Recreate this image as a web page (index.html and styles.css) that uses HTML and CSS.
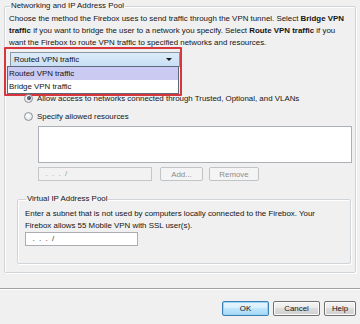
FILE: index.html
```html
<!DOCTYPE html>
<html>
<head>
<meta charset="utf-8">
<link rel="stylesheet" href="styles.css">
</head>
<body>
<div class="dialog">
  <fieldset class="group outer">
    <legend>Networking and IP Address Pool</legend>
    <p class="desc">Choose the method the Firebox uses to send traffic through the VPN tunnel. Select <b>Bridge VPN</b><br><b>traffic</b> if you want to bridge the user to a network you specify. Select <b>Route VPN traffic</b> if you<br>want the Firebox to route VPN traffic to specified networks and resources.</p>
    <div class="combo-wrap">
      <div class="combo"><span class="combo-text">Routed VPN traffic</span><span class="arrow"></span></div>
      <ul class="droplist">
        <li class="hl">Routed VPN traffic</li>
        <li>Bridge VPN traffic</li>
      </ul>
      <div class="callout"></div>
    </div>
    <div class="radio"><span class="dot on"></span><span>Allow access to networks connected through Trusted, Optional, and VLANs</span></div>
    <div class="radio"><span class="dot"></span><span>Specify allowed resources</span></div>
    <div class="listbox"></div>
    <div class="addrow">
      <div class="ipfield off">&nbsp;&nbsp;.&nbsp;&nbsp;.&nbsp;&nbsp;.&nbsp;&nbsp;/</div>
      <button class="btn off add">Add...</button>
      <button class="btn off remove">Remove</button>
    </div>
    <fieldset class="group inner">
      <legend>Virtual IP Address Pool</legend>
      <p class="desc2">Enter a subnet that is not used by computers locally connected to the Firebox. Your<br>Firebox allows 55 Mobile VPN with SSL user(s).</p>
      <div class="ipfield vip">&nbsp;&nbsp;.&nbsp;&nbsp;.&nbsp;&nbsp;.&nbsp;&nbsp;/</div>
    </fieldset>
  </fieldset>
  <div class="sep"></div>
  <div class="buttons">
    <button class="btn def">OK</button>
    <button class="btn">Cancel</button>
    <button class="btn">Help</button>
  </div>
</div>
</body>
</html>
```
FILE: styles.css
```css
html, body {
  margin: 0;
  padding: 0;
  background: #f0f0f0;
}
body {
  width: 360px;
  height: 324px;
  overflow: hidden;
  font-family: "Liberation Sans", Arial, sans-serif;
  font-size: 7.9px;
  color: #141414;
}
.dialog {
  display: flex;
  flex-direction: column;
}
.group {
  box-sizing: border-box;
  margin: 0;
  border: 1px solid #cfd4d8;
  border-radius: 2px;
  box-shadow: inset 1px 1px 0 #fff, 1px 1px 0 #fff;
  padding: 0;
  min-width: 0;
}
.group legend {
  padding: 0 1px;
  line-height: 12px;
  font-size: 7.9px;
}
.outer {
  margin: 0 4px 0 4px;
  height: 273px;
  padding: 0 0 0 4px;
}
.outer > legend { margin-left: 1px; }
.desc {
  margin: 1px 0 0 0;
  line-height: 12px;
  white-space: nowrap;
}
.combo-wrap {
  position: relative;
  margin: 3px 0 0 1px;
  width: 170px;
  height: 40px;
}
.combo {
  height: 13px;
  border: 1px solid #8a97a5;
  background: linear-gradient(#dcebf9, #c8dff5);
  display: flex;
  align-items: center;
  padding-left: 3px;
  position: relative;
}
.arrow {
  position: absolute;
  right: 7px;
  top: 5px;
  width: 0;
  height: 0;
  border-left: 3px solid transparent;
  border-right: 3px solid transparent;
  border-top: 3px solid #1b1b1b;
}
.droplist {
  position: absolute;
  left: -3px;
  top: 14px;
  width: 170px;
  margin: 0;
  padding: 0;
  list-style: none;
  border: 1px solid #5e6a78;
  background: #fff;
}
.droplist li {
  height: 13px;
  line-height: 13px;
  padding-left: 1px;
}
.droplist li.hl {
  background: #cbcaf2;
}
.callout {
  position: absolute;
  left: -6px;
  top: -5px;
  width: 174px;
  height: 45px;
  border: 2px solid #d8353c;
  border-radius: 1px;
}
.radio {
  display: flex;
  align-items: center;
  height: 12px;
  margin-left: 15px;
  gap: 4px;
}
.radio + .radio { margin-top: 6px; }
.dot {
  width: 7px;
  height: 7px;
  border-radius: 50%;
  border: 1px solid #8c9298;
  background: radial-gradient(circle at 40% 40%, #fff, #d7d9dc);
  position: relative;
  flex: none;
}
.dot.on::after {
  content: "";
  position: absolute;
  left: 1.5px;
  top: 1.5px;
  width: 4px;
  height: 4px;
  border-radius: 50%;
  background: radial-gradient(circle at 40% 40%, #6a7785, #1d2a38);
}
.listbox {
  margin: 4px 0 0 29px;
  width: 312px;
  height: 35px;
  background: #fff;
  border: 1px solid #aab0b5;
}
.addrow {
  display: flex;
  margin: 4px 0 0 29px;
  gap: 6px;
  align-items: center;
}
.ipfield {
  box-sizing: border-box;
  width: 114px;
  height: 14px;
  line-height: 12px;
  border: 1px solid #abadb3;
  background: #fff;
  color: #333;
  padding-left: 2px;
  white-space: nowrap;
}
.ipfield.off {
  background: #f2f2f2;
  color: #9a9a9a;
  border-color: #c3c6ca;
}
.btn {
  box-sizing: border-box;
  font-family: "Liberation Sans", Arial, sans-serif;
  font-size: 7.9px;
  color: #141414;
  height: 15px;
  padding: 0;
  border: 1px solid #707070;
  border-radius: 2px;
  background: linear-gradient(#f4f4f4 0%, #ebebeb 45%, #dddddd 50%, #cfcfcf 100%);
  box-shadow: inset 0 0 0 1px #fbfbfb;
}
.btn.off {
  color: #8d8d8d;
  border-color: #c0c4c7;
  background: #f4f4f4;
  box-shadow: none;
  height: 14px;
}
.btn.add { width: 43px; margin-left: 2px; }
.btn.remove { width: 50px; }
.inner {
  margin: 12px 4px 0 8px;
  height: 71px;
  padding: 0 0 0 7px;
}
.inner > legend { margin-left: 1px; }
.desc2 {
  margin: 3px 0 0 0;
  line-height: 12px;
  white-space: nowrap;
}
.vip {
  margin-top: 0;
  width: 113px;
}
.sep {
  margin-top: 15px;
  height: 1px;
  background: #a0a0a0;
  box-shadow: 0 1px 0 #fff;
}
.buttons {
  display: flex;
  justify-content: flex-end;
  gap: 4px;
  margin: 12px 4px 0 0;
}
.buttons .btn { width: 47px; }
.buttons .btn:nth-child(3) { width: 32px; }
.btn.def {
  border-color: #3c7fb1;
  box-shadow: inset 0 0 0 1px #9ad3f3;
  background: linear-gradient(#eaf6fd 0%, #d9f0fc 45%, #bee6fd 50%, #a7d9f5 100%);
}
```
